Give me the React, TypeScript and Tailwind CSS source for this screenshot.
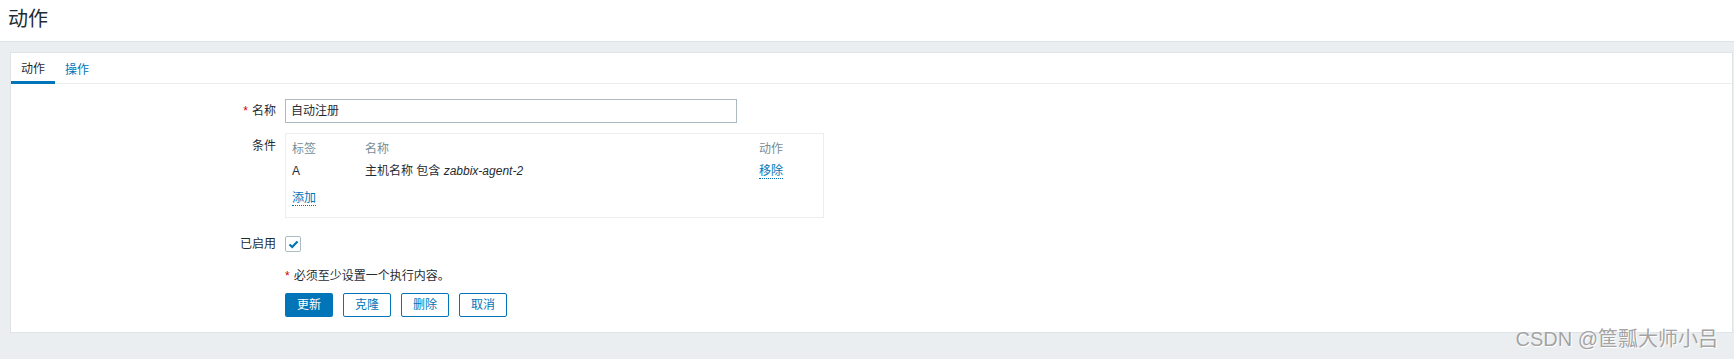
export default function App() {
  return (
    <div
      className="relative h-[359px] w-full overflow-hidden bg-[#ebeef0] text-[12px] text-[#1f2c33]"
      style={{ fontFamily: '"Liberation Sans", Arial, "Noto Sans CJK SC", sans-serif' }}
    >
      {/* page header */}
      <div className="h-[42px] border-b border-[#dfe4e7] bg-white pl-[8px]">
        <h1 className="pt-[6px] text-[20px] leading-[26px] font-normal">动作</h1>
      </div>

      {/* form container */}
      <div className="ml-[10px] mr-[1px] mt-[10px] border border-[#dfe4e7] bg-white pb-[15px]">
        {/* tabs */}
        <div className="flex h-[31px] border-b border-[#ebeef0]">
          <div className="flex h-[31px] items-center border-b-[3px] border-[#0275b8] px-[10px] pt-[3px] text-[#1f2c33]">
            动作
          </div>
          <div className="flex h-[31px] items-center px-[10px] pt-[3px] text-[#0275b8]">操作</div>
        </div>

        {/* name */}
        <div className="mt-[15px] flex">
          <div className="flex h-[24px] w-[274px] items-center justify-end pr-[9px]">
            <span className="mr-[4px] text-[#d40000]">*</span>
            名称
          </div>
          <div className="flex h-[24px] w-[452px] items-center border border-[#acbbc2] px-[5px]">自动注册</div>
        </div>

        {/* conditions */}
        <div className="mt-[10px] flex">
          <div className="w-[274px] pr-[9px] pt-[6px] text-right leading-[14px]">条件</div>
          <div className="w-[539px] border border-[#ebeef0] pb-[12px] pl-[6px] pt-[8px] leading-[14px]">
            <div className="flex text-[#768d99]">
              <div className="w-[73px]">标签</div>
              <div className="w-[394px]">名称</div>
              <div>动作</div>
            </div>
            <div className="mt-[8px] flex">
              <div className="w-[73px]">A</div>
              <div className="w-[394px]">
                主机名称 包含 <i>zabbix-agent-2</i>
              </div>
              <div>
                <span className="border-b border-dotted border-[#0275b8] text-[#0275b8]">移除</span>
              </div>
            </div>
            <div className="mt-[13px]">
              <span className="border-b border-dotted border-[#0275b8] text-[#0275b8]">添加</span>
            </div>
          </div>
        </div>

        {/* enabled */}
        <div className="mt-[17px] flex items-center">
          <div className="w-[274px] pr-[9px] text-right">已启用</div>
          <div className="flex h-[16px] w-[16px] items-center justify-center rounded-[2px] border border-[#acbbc2]">
            <svg width="11" height="9" viewBox="0 0 11 9" fill="none">
              <path d="M1.5 4.5 L4.2 7 L9.5 1.5" stroke="#0275b8" strokeWidth="2.2" />
            </svg>
          </div>
        </div>

        {/* message */}
        <div className="mt-[16px] flex leading-[14px]">
          <div className="w-[274px]" />
          <div>
            <span className="mr-[4px] text-[#d40000]">*</span>
            必须至少设置一个执行内容。
          </div>
        </div>

        {/* buttons */}
        <div className="mt-[10px] flex">
          <div className="w-[274px]" />
          <div className="flex gap-[10px]">
            <button className="h-[24px] w-[48px] rounded-[2px] bg-[#0275b8] text-white">更新</button>
            <button className="h-[24px] w-[48px] rounded-[2px] border border-[#0275b8] text-[#0275b8]">克隆</button>
            <button className="h-[24px] w-[48px] rounded-[2px] border border-[#0275b8] text-[#0275b8]">删除</button>
            <button className="h-[24px] w-[48px] rounded-[2px] border border-[#0275b8] text-[#0275b8]">取消</button>
          </div>
        </div>
      </div>

      {/* watermark */}
      <div
        className="absolute right-[16px] top-[326px] text-[20px] leading-[26px] text-[#a3a3a3]"
        style={{ textShadow: '0 0 1px #fff, 1px 1px 0 #fff' }}
      >
        CSDN @筐瓢大师小吕
      </div>
    </div>
  );
}
